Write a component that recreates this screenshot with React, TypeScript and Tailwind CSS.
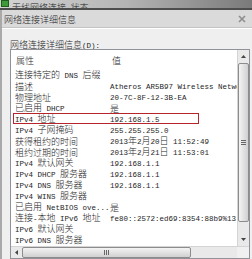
import React from "react";

const CJK = /[\u3000-\u9fff\uff00-\uffef]/;

function T({ s }: { s: string }) {
  const parts: { t: string; c: boolean }[] = [];
  for (const ch of s) {
    const c = CJK.test(ch);
    const last = parts[parts.length - 1];
    if (last && last.c === c) last.t += ch;
    else parts.push({ t: ch, c });
  }
  return (
    <>
      {parts.map((p, i) =>
        p.c ? (
          <span key={i} className="text-[9px] font-light font-['Noto_Sans_CJK_SC',sans-serif]">
            {p.t}
          </span>
        ) : (
          <span key={i} className="text-[7.5px] font-['Liberation_Mono',monospace]">
            {p.t}
          </span>
        )
      )}
    </>
  );
}

const rows: [string, string][] = [
  ["连接特定的 DNS 后缀", ""],
  ["描述", "Atheros AR5B97 Wireless Networ"],
  ["物理地址", "20-7C-8F-12-3B-EA"],
  ["已启用 DHCP", "是"],
  ["IPv4 地址", "192.168.1.5"],
  ["IPv4 子网掩码", "255.255.255.0"],
  ["获得租约的时间", "2013年2月20日 11:52:49"],
  ["租约过期的时间", "2013年2月21日 11:53:01"],
  ["IPv4 默认网关", "192.168.1.1"],
  ["IPv4 DHCP 服务器", "192.168.1.1"],
  ["IPv4 DNS 服务器", "192.168.1.1"],
  ["IPv4 WINS 服务器", ""],
  ["已启用 NetBIOS ove...", "是"],
  ["连接-本地 IPv6 地址", "fe80::2572:ed69:8354:88b9%13"],
  ["IPv6 默认网关", ""],
  ["IPv6 DNS 服务器", ""],
];

export default function App() {
  return (
    <div className="w-[252px] h-[259px] overflow-hidden bg-[#efefef] flex flex-col text-[#1e1e1e] leading-[11px]">
      {/* background window title strip */}
      <div className="h-[8px] shrink-0 bg-gradient-to-r from-[#d4d4d4] via-[#b4b4b4] to-[#7a7a7a] flex items-end overflow-hidden whitespace-pre">
        <div className="ml-[1px] mb-[1px] w-[8px] h-[7px] bg-[#3f9a3a] border border-[#1f5f1c] shrink-0" />
        <div className="ml-[3px] mb-[-3px] h-[11px] leading-[11px] text-[#222]">
          <T s="无线网络连接 状态" />
        </div>
      </div>
      <div className="h-[2px] shrink-0 bg-[#4d4d4d]" />
      {/* dialog */}
      <div className="flex-1 flex flex-col border-l-[2px] border-[#a9a9a9]">
        <div className="h-[18px] shrink-0 bg-[#dadada] flex items-center justify-between pl-[2px] pr-[6px] border-b border-[#c4c4c4]">
          <div className="leading-[11px] whitespace-pre">
            <T s="网络连接详细信息" />
          </div>
          <svg width="8" height="8" viewBox="0 0 8 8">
            <path d="M1 1L7 7M7 1L1 7" stroke="#8d8d8d" strokeWidth="1.6" />
          </svg>
        </div>
        <div className="h-[1px] shrink-0 bg-white" />
        <div className="flex-1 flex flex-col pl-[8px] pt-[8px]">
          <div className="h-[11px] leading-[11px] whitespace-pre shrink-0">
            <T s="网络连接详细信息(D):" />
          </div>
          <div className="mt-[1px] w-[240px] flex-1 bg-white border border-[#8f9399] flex flex-col">
            <div className="flex flex-1">
              {/* content */}
              <div className="w-[226px] flex flex-col overflow-hidden">
                <div className="h-[19px] shrink-0 flex items-center whitespace-pre">
                  <div className="w-[99px] pl-[5px]">
                    <T s="属性" />
                  </div>
                  <div className="pl-[2px]">
                    <T s="值" />
                  </div>
                </div>
                {rows.map(([k, v], i) => (
                  <div key={i} className="relative h-[11px] shrink-0 flex items-center whitespace-pre">
                    <div className="w-[99px] pl-[4px] overflow-hidden shrink-0">
                      <T s={k} />
                    </div>
                    <div className="shrink-0">
                      <T s={v} />
                    </div>
                    {i === 4 && (
                      <div className="absolute left-[2px] top-0 w-[186px] h-[11px] border-[1.5px] border-[#b5252b]" />
                    )}
                  </div>
                ))}
              </div>
              {/* vertical scrollbar */}
              <div className="w-[12px] bg-[#e9e9e9] border-l border-[#d4d4d4] flex flex-col items-center">
                <div className="h-[13px] w-full flex items-center justify-center">
                  <svg width="5" height="3" viewBox="0 0 5 3">
                    <path d="M0 3L2.5 0L5 3Z" fill="#444" />
                  </svg>
                </div>
                <div className="w-[11px] h-[159px] rounded-[2px] border border-[#8c8c8c] bg-gradient-to-r from-[#f4f4f4] to-[#d0d0d0] flex items-center justify-center">
                  <div className="flex flex-col gap-[1px]">
                    <div className="w-[5px] h-[1px] bg-[#666]" />
                    <div className="w-[5px] h-[1px] bg-[#666]" />
                    <div className="w-[5px] h-[1px] bg-[#666]" />
                  </div>
                </div>
                <div className="flex-1" />
                <div className="h-[13px] w-full flex items-center justify-center">
                  <svg width="5" height="3" viewBox="0 0 5 3">
                    <path d="M0 0L2.5 3L5 0Z" fill="#444" />
                  </svg>
                </div>
              </div>
            </div>
            {/* horizontal scrollbar */}
            <div className="h-[12px] shrink-0 flex bg-[#e9e9e9] border-t border-[#d4d4d4]">
              <div className="w-[226px] flex items-center">
                <div className="w-[11px] flex items-center justify-center">
                  <svg width="3" height="5" viewBox="0 0 3 5">
                    <path d="M3 0L0 2.5L3 5Z" fill="#444" />
                  </svg>
                </div>
                <div className="w-[169px] h-[11px] rounded-[2px] border border-[#8c8c8c] bg-gradient-to-b from-[#f4f4f4] to-[#d0d0d0] flex items-center justify-center">
                  <div className="flex gap-[1px]">
                    <div className="w-[1px] h-[5px] bg-[#666]" />
                    <div className="w-[1px] h-[5px] bg-[#666]" />
                    <div className="w-[1px] h-[5px] bg-[#666]" />
                  </div>
                </div>
                <div className="flex-1" />
              </div>
              <div className="w-[12px] bg-[#f0f0f0]" />
            </div>
          </div>
        </div>
      </div>
    </div>
  );
}
